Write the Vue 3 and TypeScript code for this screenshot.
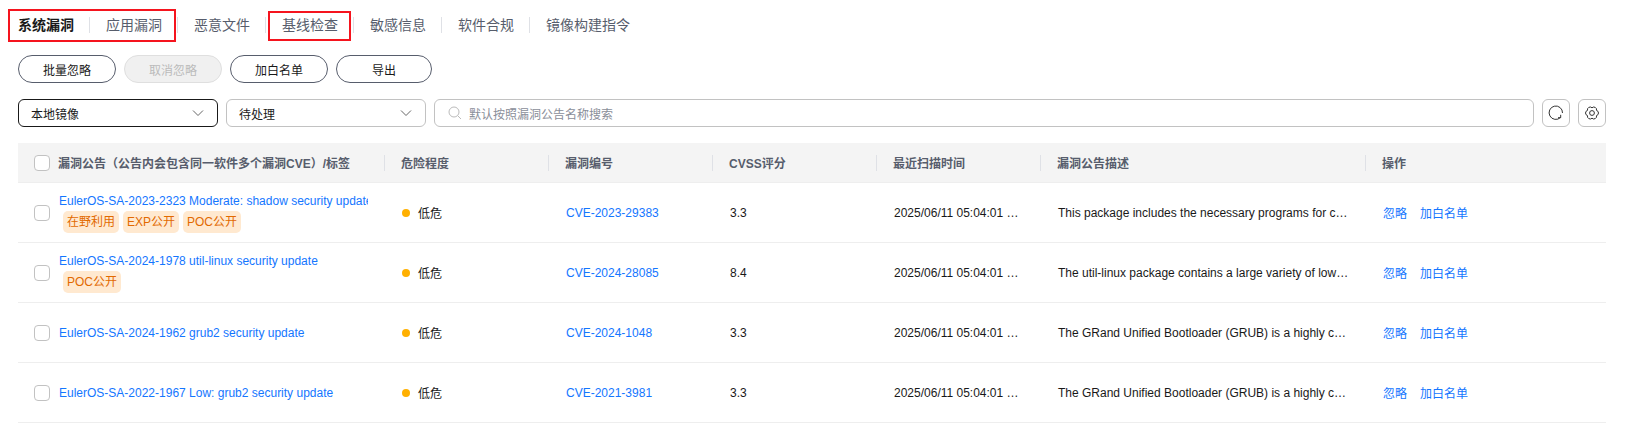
<script setup lang="ts">
interface Row {
  title: string
  tags: string[]
  cve: string
  score: string
  desc: string
}
const tabs = ['系统漏洞', '应用漏洞', '恶意文件', '基线检查', '敏感信息', '软件合规', '镜像构建指令']
const buttons = [
  { label: '批量忽略', disabled: false },
  { label: '取消忽略', disabled: true },
  { label: '加白名单', disabled: false },
  { label: '导出', disabled: false },
]
const heads = ['危险程度', '漏洞编号', 'CVSS评分', '最近扫描时间', '漏洞公告描述', '操作']
const rows: Row[] = [
  { title: 'EulerOS-SA-2023-2323 Moderate: shadow security update', tags: ['在野利用', 'EXP公开', 'POC公开'], cve: 'CVE-2023-29383', score: '3.3', desc: 'This package includes the necessary programs for c…' },
  { title: 'EulerOS-SA-2024-1978 util-linux security update', tags: ['POC公开'], cve: 'CVE-2024-28085', score: '8.4', desc: 'The util-linux package contains a large variety of low…' },
  { title: 'EulerOS-SA-2024-1962 grub2 security update', tags: [], cve: 'CVE-2024-1048', score: '3.3', desc: 'The GRand Unified Bootloader (GRUB) is a highly c…' },
  { title: 'EulerOS-SA-2022-1967 Low: grub2 security update', tags: [], cve: 'CVE-2021-3981', score: '3.3', desc: 'The GRand Unified Bootloader (GRUB) is a highly c…' },
]
</script>

<template>
  <div class="page">
    <div class="mark mark-a"></div>
    <div class="mark mark-b"></div>
    <nav class="tabs">
      <span v-for="(t, i) in tabs" :key="t" class="tab" :class="{ active: i === 0 }">{{ t }}</span>
    </nav>
    <div class="actions">
      <button v-for="b in buttons" :key="b.label" class="btn" :disabled="b.disabled">{{ b.label }}</button>
    </div>
    <div class="filters">
      <div class="select focus">
        <span>本地镜像</span>
        <svg width="12" height="12" viewBox="0 0 12 12"><path d="M1 3.5 6 8.5 11 3.5" fill="none" stroke="#666" /></svg>
      </div>
      <div class="select">
        <span>待处理</span>
        <svg width="12" height="12" viewBox="0 0 12 12"><path d="M1 3.5 6 8.5 11 3.5" fill="none" stroke="#666" /></svg>
      </div>
      <div class="search">
        <svg width="14" height="14" viewBox="0 0 14 14"><circle cx="6" cy="6" r="5" fill="none" stroke="#bbb" /><path d="M9.8 9.8 13 13" stroke="#bbb" /></svg>
        <span>默认按照漏洞公告名称搜索</span>
      </div>
      <div class="icon-btn">
        <svg width="18" height="18" viewBox="0 0 18 18" fill="none" stroke="#333"><path d="M15.5 9A6.7 6.7 0 1 0 13.5 13.5" /><path d="M13.7 10.8V13.7H11" /></svg>
      </div>
      <div class="icon-btn">
        <svg width="18" height="18" viewBox="0 0 18 18" fill="none" stroke="#333"><path d="M9 3.8A2.7 2.7 0 0 1 13.5 6.4 2.7 2.7 0 0 1 13.5 11.6 2.7 2.7 0 0 1 9 14.2 2.7 2.7 0 0 1 4.5 11.6 2.7 2.7 0 0 1 4.5 6.4 2.7 2.7 0 0 1 9 3.8Z" stroke-linejoin="round" /><circle cx="9" cy="9" r="2.4" /></svg>
      </div>
    </div>
    <div class="table">
      <div class="row head">
        <div class="cell first">
          <span class="check"></span>
          <span class="head-text">漏洞公告（公告内会包含同一软件多个漏洞CVE）/标签</span>
        </div>
        <div v-for="h in heads" :key="h" class="cell"><span class="head-text">{{ h }}</span></div>
      </div>
      <div v-for="r in rows" :key="r.cve + r.title" class="row body">
        <div class="cell first">
          <span class="check"></span>
          <div class="title-box">
            <a class="link title">{{ r.title }}</a>
            <div v-if="r.tags.length" class="tags">
              <span v-for="t in r.tags" :key="t" class="tag">{{ t }}</span>
            </div>
          </div>
        </div>
        <div class="cell"><i class="dot"></i>低危</div>
        <div class="cell"><a class="link">{{ r.cve }}</a></div>
        <div class="cell">{{ r.score }}</div>
        <div class="cell nowrap">2025/06/11 05:04:01 …</div>
        <div class="cell nowrap">{{ r.desc }}</div>
        <div class="cell ops"><a class="link">忽略</a><a class="link">加白名单</a></div>
      </div>
    </div>
  </div>
</template>

<style>
html, body { margin: 0; background: #fff; }
</style>

<style scoped>
.page {
  position: relative;
  box-sizing: border-box;
  width: 1628px;
  height: 428px;
  padding: 15px 22px 0 18px;
  overflow: hidden;
  font: 12px "Liberation Sans", "Noto Sans CJK SC", sans-serif;
  color: #191919;
}
.mark { position: absolute; border: 2px solid #f5141e; box-sizing: border-box; }
.mark-a { left: 8px; top: 9px; width: 168px; height: 33px; }
.mark-b { left: 268px; top: 11px; width: 83px; height: 30px; }
.tabs { display: flex; height: 20px; align-items: center; }
.tab {
  font-size: 14px;
  line-height: 16px;
  color: #575d6c;
  padding: 0 16px;
  border-left: 1px solid #dfe1e6;
  margin-left: -1px;
}
.tab:first-child { padding-left: 0; border-left: 0; margin-left: 0; }
.tab.active { color: #191919; font-weight: 700; }
.actions { display: flex; gap: 8px; margin-top: 20px; }
.btn {
  box-sizing: border-box;
  width: 98px;
  height: 28px;
  border: 1px solid #575d6c;
  border-radius: 14px;
  background: #fff;
  color: #191919;
  font: inherit;
  padding: 0;
}
.btn:last-child { width: 96px; }
.btn:disabled { background: #f0f0f0; border-color: #dfdfdf; color: #bbb; }
.filters { display: flex; margin-top: 16px; height: 28px; }
.select, .search, .icon-btn {
  box-sizing: border-box;
  height: 28px;
  border: 1px solid #c2c2c2;
  border-radius: 6px;
  display: flex;
  align-items: center;
  background: #fff;
}
.select {
  width: 200px;
  padding: 0 13px 0 12px;
  justify-content: space-between;
  margin-right: 8px;
}
.select.focus { border-color: #191919; }
.search { flex: 1; padding-left: 13px; gap: 7px; color: #8a8e99; margin-right: 8px; }
.icon-btn { width: 28px; justify-content: center; }
.icon-btn + .icon-btn { margin-left: 8px; }
.table { margin-top: 16px; }
.row {
  display: grid;
  grid-template-columns: 366px 164px 164px 164px 164px 325px 241px;
  border-bottom: 1px solid #eeeeee;
  box-sizing: border-box;
}
.head { height: 40px; background: #f4f4f4; }
.body { height: 60px; }
.cell {
  display: flex;
  align-items: center;
  min-width: 0;
  padding-left: 18px;
  box-sizing: border-box;
}
.first { padding-left: 16px; }
.nowrap { white-space: pre; }
.head .cell { position: relative; padding-left: 17px; }
.head .first { padding-left: 16px; }
.head .cell + .cell::before {
  content: "";
  position: absolute;
  left: 0;
  top: 12px;
  height: 16px;
  width: 1px;
  background: #dfe1e6;
}
.head-text { font-weight: 700; color: #575d6c; white-space: nowrap; }
.check {
  flex: none;
  box-sizing: border-box;
  width: 16px;
  height: 16px;
  border: 1px solid #c2c2c2;
  border-radius: 4px;
  background: #fff;
  margin-right: 8px;
}
.body .check { margin-right: 9px; }
.title-box { min-width: 0; flex: 1; overflow: hidden; margin-right: 16px; padding-top: 1px; }
.link { color: #1476ff; white-space: nowrap; }
.title { display: block; line-height: 16px; overflow: hidden; }
.tags { display: flex; gap: 4px; margin: 2px 0 0 4px; }
.tag {
  height: 22px;
  line-height: 22px;
  padding: 0 4px;
  border-radius: 5px;
  background: #ffe9d0;
  color: #e26a00;
}
.dot {
  width: 8px;
  height: 8px;
  border-radius: 50%;
  background: #ffb000;
  margin-right: 8px;
}
.ops { gap: 13px; }
</style>
